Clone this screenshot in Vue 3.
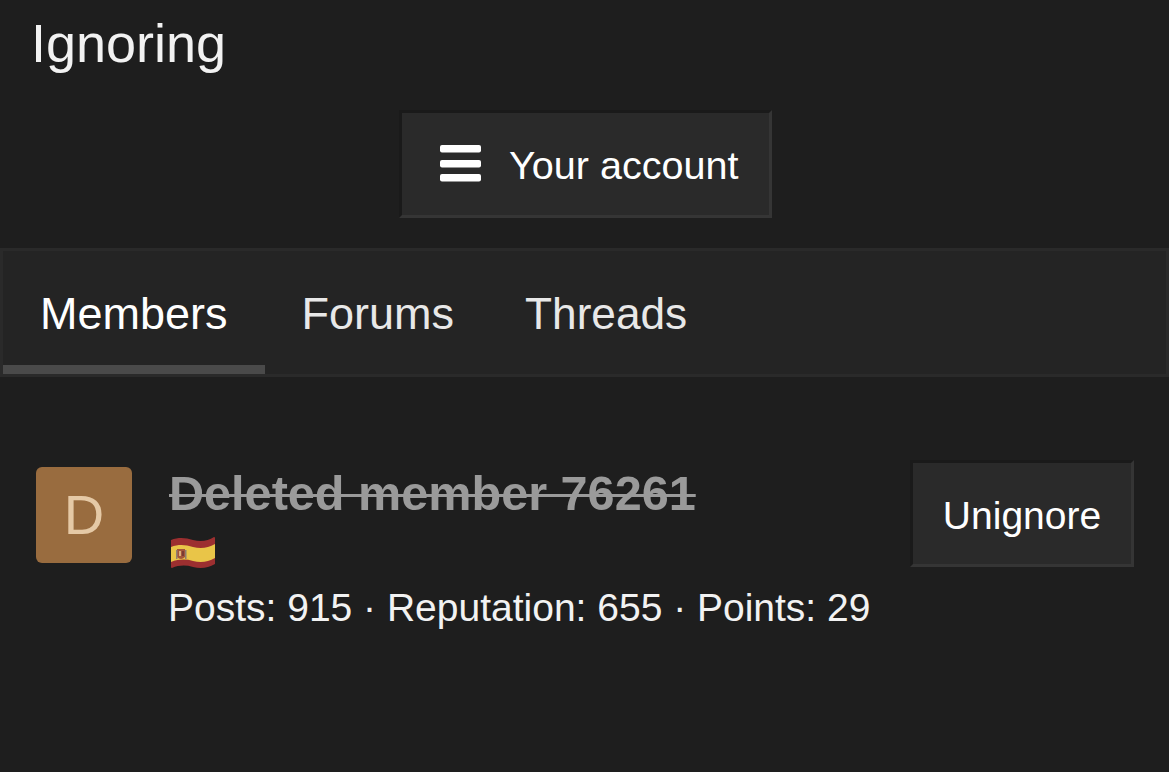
<script setup>
const tabs = ['Members', 'Forums', 'Threads']
const stats = 'Posts: 915 · Reputation: 655 · Points: 29'
</script>

<template>
  <div class="page">
    <h1 class="title">Ignoring</h1>

    <div class="account-row">
      <button class="btn account-btn">
        <svg class="burger" width="41" height="37" viewBox="0 0 41 37">
          <rect x="0" y="0" width="41" height="7.5" rx="2" fill="#fff" />
          <rect x="0" y="15" width="41" height="7.5" rx="2" fill="#fff" />
          <rect x="0" y="29" width="41" height="7.5" rx="2" fill="#fff" />
        </svg>
        <span class="account-label">Your account</span>
      </button>
    </div>

    <div class="tabs">
      <div
        v-for="(tab, i) in tabs"
        :key="tab"
        class="tab"
        :class="{ active: i === 0 }"
      >{{ tab }}</div>
    </div>

    <div class="member">
      <div class="avatar">D</div>
      <div class="info">
        <div class="name">Deleted member 76261</div>
        <svg class="flag" width="44" height="33" viewBox="0 0 44 33">
          <path d="M0 3 C8 0 15 1 22 3 C30 5 37 4 43 0 Q44 0 44 1 L44 27 C37 31 30 32 22 30 C15 28 8 28 1 31 Q0 31 0 30 Z" fill="#9c2f30" />
          <path d="M0 10 C8 7 15 8 22 10 C30 12 37 11 44 7 L44 21 C37 25 30 26 22 24 C15 22 8 22 0 25 Z" fill="#e9c548" />
          <path d="M6 12 L14 12 L14 20 Q10 24 6 20 Z" fill="#a4553a" />
          <rect x="8" y="14" width="2" height="5" fill="#d9b07a" />
          <rect x="11" y="14" width="2" height="5" fill="#7b3a34" />
          <rect x="5" y="13" width="1.5" height="9" fill="#8f7f70" />
          <rect x="14" y="13" width="1.5" height="9" fill="#8f7f70" />
        </svg>
        <div class="stats">{{ stats }}</div>
      </div>
      <button class="btn unignore">Unignore</button>
    </div>
  </div>
</template>

<style scoped>
.page {
  width: 1169px;
  height: 772px;
  overflow: hidden;
  background: #1e1e1e;
  color: #fff;
  font-family: "Liberation Sans", Arial, sans-serif;
}

.title {
  margin: 0;
  padding: 9px 31px 0;
  font-size: 54px;
  line-height: 68px;
  font-weight: 400;
  color: #f2f2f2;
}

.account-row {
  display: flex;
  justify-content: center;
  margin-top: 33px;
  padding-left: 2px;
}

.btn {
  background: #2a2a2a;
  color: #fff;
  font-family: inherit;
  font-size: 39px;
  border-style: solid;
  border-width: 3px;
  border-color: #1a1a1a #353535 #353535 #1a1a1a;
}

.account-btn {
  display: flex;
  align-items: center;
  gap: 28px;
  width: 373px;
  height: 108px;
  padding: 0 0 0 38px;
}

.account-label {
  margin-top: 2px;
  font-size: 39.6px;
}

.burger {
  flex: none;
  margin-top: -1px;
}

.tabs {
  display: flex;
  height: 129px;
  margin-top: 30px;
  background: #242424;
  border: 3px solid #2a2a2a;
  box-sizing: border-box;
}

.tab {
  padding: 0 37px;
  font-size: 45px;
  line-height: 126px;
  height: 123px;
  color: #e8e8e8;
  box-sizing: border-box;
}

.tab:last-child {
  margin-left: -3px;
  font-size: 44.2px;
}

.tab.active {
  color: #fff;
  border-bottom: 9px solid #4a4a4a;
}

.member {
  display: flex;
  align-items: flex-start;
  padding: 83px 35px 0 36px;
}

.avatar {
  flex: none;
  width: 96px;
  height: 96px;
  margin-top: 7px;
  border-radius: 6px;
  background: #996c3f;
  color: #e5c9a6;
  font-size: 56px;
  line-height: 96px;
  text-align: center;
}

.info {
  flex: 1;
  margin-left: 37px;
}

.name {
  margin-top: 5px;
  font-size: 48.6px;
  line-height: 56px;
  font-weight: 700;
  color: #9a9a9a;
  text-decoration: line-through;
  text-decoration-thickness: 3px;
}

.flag {
  display: block;
  margin: 16px 0 0 2px;
}

.stats {
  margin: 13px 0 0 -1px;
  font-size: 39px;
  line-height: 50px;
  color: #f2f2f2;
}

.unignore {
  flex: none;
  width: 224px;
  height: 107px;
  padding: 4px 0 0;
}
</style>
